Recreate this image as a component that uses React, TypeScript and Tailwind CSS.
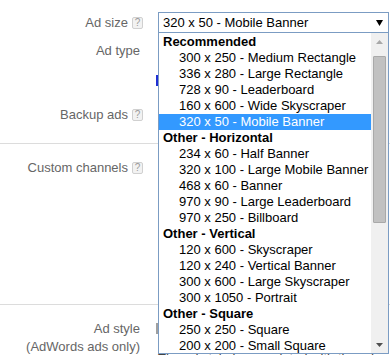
import React from "react";

const groups = [
  {
    name: "Recommended",
    items: [
      "300 x 250 - Medium Rectangle",
      "336 x 280 - Large Rectangle",
      "728 x 90 - Leaderboard",
      "160 x 600 - Wide Skyscraper",
      "320 x 50 - Mobile Banner",
    ],
  },
  {
    name: "Other - Horizontal",
    items: [
      "234 x 60 - Half Banner",
      "320 x 100 - Large Mobile Banner",
      "468 x 60 - Banner",
      "970 x 90 - Large Leaderboard",
      "970 x 250 - Billboard",
    ],
  },
  {
    name: "Other - Vertical",
    items: [
      "120 x 600 - Skyscraper",
      "120 x 240 - Vertical Banner",
      "300 x 600 - Large Skyscraper",
      "300 x 1050 - Portrait",
    ],
  },
  {
    name: "Other - Square",
    items: ["250 x 250 - Square", "200 x 200 - Small Square", "180 x 150 - Small Rectangle", "125 x 125 - Button"],
  },
];

const selected = "320 x 50 - Mobile Banner";

const Help = () => (
  <span className="flex h-[12px] w-[11px] items-center justify-center rounded-[2px] border border-[#d0d0d0] bg-[#f2f2f2] text-[10px] leading-none text-[#9a9a9a]">
    ?
  </span>
);

const Label = ({ text, help }: { text: string; help?: boolean }) => (
  <div className={`flex items-center justify-end gap-[4px] text-[#666] ${help ? "" : "pr-[3px]"}`}>
    <span>{text}</span>
    {help && <Help />}
  </div>
);

// open list of the Ad size select
const Dropdown = () => (
  <div className="absolute left-[158px] top-[32px] flex h-[322px] w-[231px] border border-[#7b9cc3] bg-white">
    <div className="flex-1 overflow-hidden pt-px leading-[16px]">
      {groups.map((g) => (
        <div key={g.name}>
          <div className="h-[16px] pl-[4px] font-bold text-black">{g.name}</div>
          {g.items.map((it) => (
            <div
              key={it}
              className={`h-[16px] whitespace-nowrap pl-[20px] ${it === selected ? "bg-[#3399ff] text-white" : "text-black"}`}
            >
              {it}
            </div>
          ))}
        </div>
      ))}
    </div>
    {/* scrollbar */}
    <div className="flex w-[17px] flex-col bg-[#f0f0f0]">
      <div className="flex h-[17px] items-center justify-center">
        <svg width="7" height="4" viewBox="0 0 7 4">
          <path d="M0 4 L3.5 0 L7 4 Z" fill="#a8a8a8" />
        </svg>
      </div>
      <div className="mx-[2px] mt-[6px] h-[167px] rounded-[1px] border border-[#a9a9a9] bg-[#c1c1c1]" />
      <div className="mt-auto flex h-[17px] items-center justify-center">
        <svg width="7" height="4" viewBox="0 0 7 4">
          <path d="M0 0 L7 0 L3.5 4 Z" fill="#505050" />
        </svg>
      </div>
    </div>
  </div>
);

export default function App() {
  return (
    <div className="relative h-[355px] w-[390px] overflow-hidden bg-white font-['Liberation_Sans',Arial,sans-serif] text-[13px] leading-[15px]">
      <div className="h-[144px] border-b border-[#dcdcdc] pt-[12px]">
        <div className="grid h-[21px] grid-cols-[143px_1fr] gap-x-[13px]">
          <Label text="Ad size" help />
          <div className="ml-[2px] flex h-[21px] w-[231px] items-center justify-between border border-[#7b9cc3] pl-[4px] pr-[5px] text-black">
            <span>{selected}</span>
            <svg width="7" height="6" viewBox="0 0 7 6">
              <path d="M0 0 L7 0 L3.5 6 Z" fill="#000" />
            </svg>
          </div>
        </div>
        <div className="grid h-[71px] grid-cols-[143px_1fr] gap-x-[13px]">
          <div className="pt-[10px]">
            <Label text="Ad type" />
          </div>
          <div className="pt-[42px]">
            <div className="h-[11px] w-[2px] bg-[#1f2fd4]" />
          </div>
        </div>
        <div className="grid h-[21px] grid-cols-[143px_1fr] gap-x-[13px]">
          <Label text="Backup ads" help />
          <div />
        </div>
      </div>

      <div className="h-[161px] border-b border-[#dcdcdc] pt-[13px]">
        <div className="grid h-[21px] grid-cols-[143px_1fr] gap-x-[13px]">
          <Label text="Custom channels" help />
          <div />
        </div>
      </div>

      <div className="grid grid-cols-[143px_1fr] gap-x-[13px] pt-[15px]">
        <div className="pr-[3px] text-right leading-[18px] text-[#666]">
          <div>Ad style</div>
          <div>(AdWords ads only)</div>
        </div>
        <div className="flex flex-col">
          <div className="mt-[3px] h-[11px] w-[2px] bg-[#a0a0a0]" />
          <div className="mt-[17px] whitespace-nowrap pl-[2px] text-[#444]">The ad style is associated with the ad unit</div>
        </div>
      </div>

      <Dropdown />
    </div>
  );
}
